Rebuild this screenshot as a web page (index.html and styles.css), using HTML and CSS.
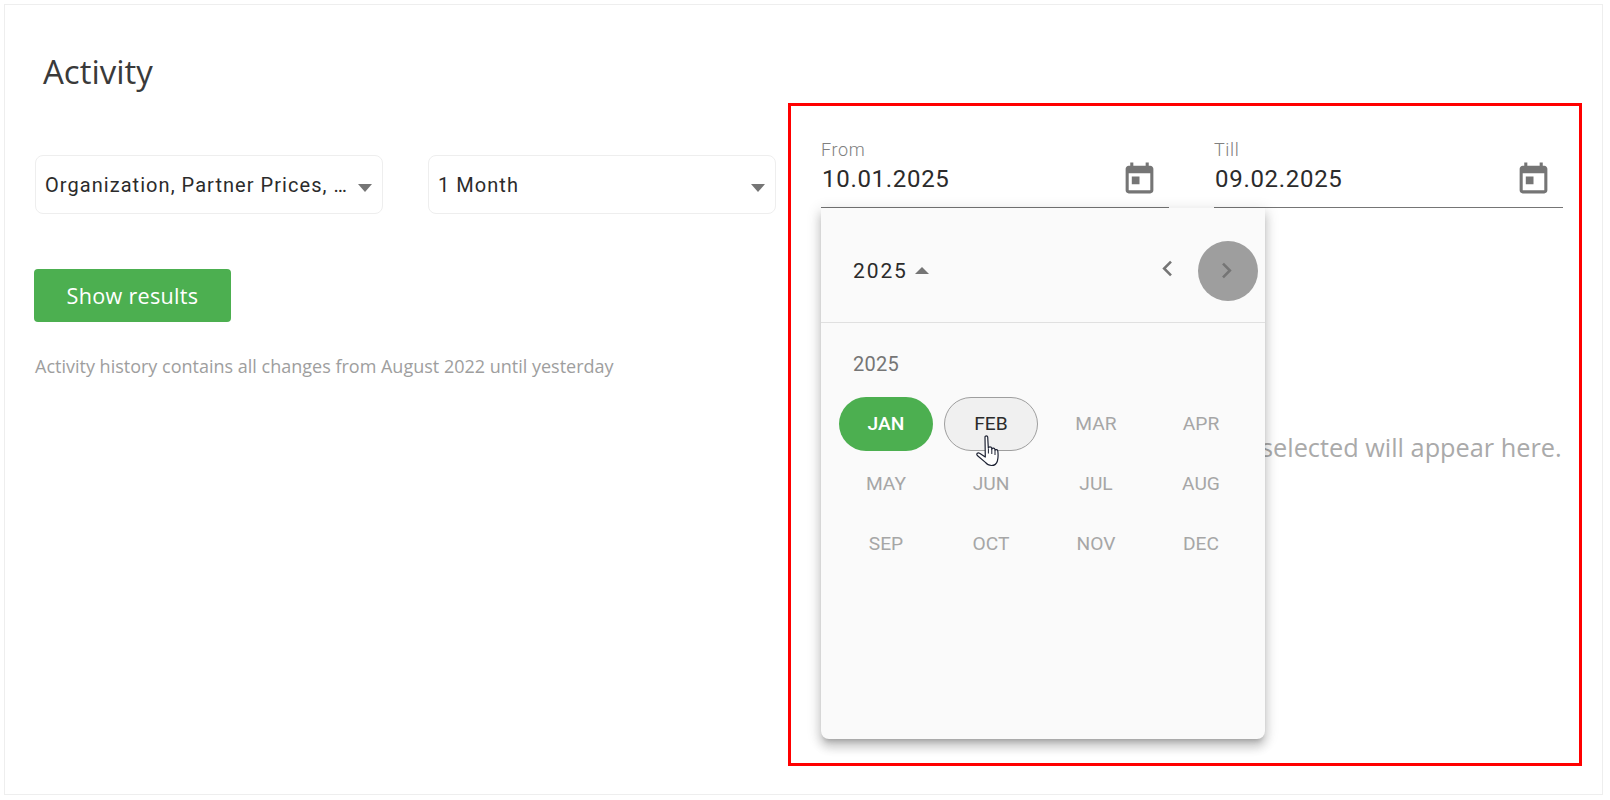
FILE: index.html
```html
<!DOCTYPE html>
<html lang="en">
<head>
<meta charset="utf-8">
<title>Activity</title>
<link rel="stylesheet" href="styles.css">
</head>
<body>
<main class="card">
  <h1 class="title">Activity</h1>
  <div class="columns">
    <section class="left">
      <div class="selects">
        <div class="select"><span class="select-text">Organization, Partner Prices, …</span><span class="arrow"></span></div>
        <div class="select"><span class="select-text">1 Month</span><span class="arrow"></span></div>
      </div>
      <button class="primary" type="button">Show results</button>
      <p class="note">Activity history contains all changes from August 2022 until yesterday</p>
    </section>
    <section class="right">
      <div class="dates">
        <div class="date">
          <div class="date-text">
            <span class="date-label">From</span>
            <span class="date-value">10.01.2025</span>
          </div>
          <svg class="cal" viewBox="0 0 24 24"><path d="M19 3h-1V1h-2v2H8V1H6v2H5c-1.11 0-1.99.9-1.99 2L3 19c0 1.1.89 2 2 2h14c1.1 0 2-.9 2-2V5c0-1.1-.9-2-2-2zm0 16H5V8h14v11zM7 10h5v5H7z"/></svg>
        </div>
        <div class="date">
          <div class="date-text">
            <span class="date-label">Till</span>
            <span class="date-value">09.02.2025</span>
          </div>
          <svg class="cal" viewBox="0 0 24 24"><path d="M19 3h-1V1h-2v2H8V1H6v2H5c-1.11 0-1.99.9-1.99 2L3 19c0 1.1.89 2 2 2h14c1.1 0 2-.9 2-2V5c0-1.1-.9-2-2-2zm0 16H5V8h14v11zM7 10h5v5H7z"/></svg>
        </div>
      </div>
      <p class="empty">selected will appear here.</p>

      <div class="picker">
        <div class="picker-head">
          <span class="picker-year">2025</span>
          <span class="up"></span>
          <span class="nav prev"><svg viewBox="0 0 24 24"><path d="M15.41 7.41 14 6l-6 6 6 6 1.41-1.41L10.83 12z"/></svg></span>
          <span class="nav next"><svg viewBox="0 0 24 24"><path d="M8.59 16.59 10 18l6-6-6-6-1.41 1.41L13.17 12z"/></svg></span>
        </div>
        <div class="picker-body">
          <div class="year-label">2025</div>
          <div class="months">
            <span class="month selected">JAN</span>
            <span class="month hover">FEB</span>
            <span class="month">MAR</span>
            <span class="month">APR</span>
            <span class="month">MAY</span>
            <span class="month">JUN</span>
            <span class="month">JUL</span>
            <span class="month">AUG</span>
            <span class="month">SEP</span>
            <span class="month">OCT</span>
            <span class="month">NOV</span>
            <span class="month">DEC</span>
          </div>
        </div>
        <svg class="hand" viewBox="0 0 26 32"><path d="M9 2c0-1.400 2.600-1.400 2.700 0l.6 11c.2-1.600 3.200-1.700 3.400.1l.1 1c.3-1.400 2.900-1.300 3.100.3l.1.9c.4-1.100 2.600-.9 2.800.7.400 3 .3 7.400-.4 10-.7 2.500-3 4.500-5.900 4.500-2.700 0-4.600-1.200-6.100-3.100L1.300 20.500c-1.300-1.700.6-3.500 2.300-2.300l5.700 3.800z" fill="#fff" stroke="#1d2233" stroke-width="1.200" stroke-linejoin="round"/><path d="M12.400 13.500v5M15.800 14v5M19 15.400V20" fill="none" stroke="#1d2233" stroke-width="1"/></svg>
      </div>
    </section>
  </div>
  <div class="marker"></div>
</main>
</body>
</html>
```
FILE: styles.css
```css
* { box-sizing: border-box; }
html, body { margin: 0; padding: 0; background: #fff; }
body { width: 1610px; height: 800px; overflow: hidden; font-family: Roboto, "Liberation Sans", sans-serif; color: #212121; }

.card {
  position: relative;
  width: 1599px;
  height: 791px;
  margin: 4px 0 0 4px;
  border: 1px solid #eeeeee;
  padding: 0 0 0 30px;
}

.title {
  margin: 0 0 0 8px;
  padding-top: 43px;
  font: 400 33px/48px "Open Sans", sans-serif;
  color: #3a3a3a;
}

.columns { display: flex; margin-top: 34px; }
.left { width: 786px; padding-top: 25px; }
.selects { display: flex; gap: 45px; }
.select {
  width: 348px;
  height: 59px;
  display: flex;
  align-items: center;
  justify-content: space-between;
  padding: 0 10px 0 10px;
  border: 1px solid #eeeeee;
  border-radius: 8px;
  background: #fff;
}
.select-text { font-size: 20px; letter-spacing: 1.05px; color: #2b2b2b; margin-left: -1px; }
.arrow {
  width: 0; height: 0;
  margin-top: 6px;
  border-left: 7px solid transparent;
  border-right: 7px solid transparent;
  border-top: 8px solid #757575;
}

.primary {
  display: block;
  width: 197px;
  height: 53px;
  margin: 55px 0 0 -1px;
  border: 0;
  border-radius: 4px;
  background: #4caf50;
  color: #fff;
  font: 400 21.6px "Open Sans", sans-serif;
  letter-spacing: 0.3px;
}
.note {
  margin: 30px 0 0 0;
  font: 400 18px/28px "Open Sans", sans-serif;
  color: #9e9e9e;
}

.right { position: relative; width: 742px; padding-top: 0; }
.dates { display: flex; gap: 45px; }
.date {
  width: 348px;
  height: 78px;
  padding-top: 8px;
  border-bottom: 1px solid #757575;
  display: flex;
  justify-content: space-between;
}
.date + .date { width: 349px; }
.date-text { display: flex; flex-direction: column; }
.date-label { font-size: 18px; line-height: 24px; letter-spacing: 0.6px; color: #808080; font-weight: 300; }
.date-value { font-size: 24px; line-height: 32px; letter-spacing: 0.7px; color: #2b2b2b; margin: 1px 0 0 1px; }
.cal { width: 37px; height: 37px; margin: 23px 11px 0 0; fill: #757575; }

.empty {
  margin: 223px 0 0 440px;
  font: 400 25.3px/32px "Open Sans", sans-serif;
  color: #aaaaaa;
  white-space: nowrap;
}

.picker {
  position: absolute;
  left: 0;
  top: 78px;
  width: 444px;
  height: 531px;
  background: #fafafa;
  border-radius: 0 0 8px 8px;
  box-shadow: 0 5px 5px -3px rgba(0,0,0,.2), 0 8px 10px 1px rgba(0,0,0,.14), 0 3px 14px 2px rgba(0,0,0,.12);
}
.picker-head {
  display: flex;
  align-items: center;
  height: 115px;
  padding: 11px 7px 0 32px;
  border-bottom: 1px solid #e0e0e0;
}
.picker-year { font-size: 21px; letter-spacing: 1.9px; color: #2b2b2b; }
.up {
  width: 0; height: 0;
  margin-left: 7px;
  border-left: 7.500px solid transparent;
  border-right: 7.500px solid transparent;
  border-bottom: 7px solid #757575;
}
.nav {
  width: 60px;
  height: 60px;
  display: flex;
  align-items: center;
  justify-content: center;
  border-radius: 50%;
}
.nav svg { width: 31px; height: 31px; fill: #757575; }
.prev { margin-left: auto; position: relative; top: -2px; }
.next { background: #9e9e9e; margin-left: 1px; padding-right: 4px; }

.picker-body { padding: 0 14px 0 18px; }
.year-label { padding: 27px 0 0 14px; font-size: 20px; line-height: 28px; color: #757575; letter-spacing: 0.3px; }
.months {
  display: grid;
  grid-template-columns: repeat(4, 94px);
  grid-auto-rows: 54px;
  column-gap: 11px;
  row-gap: 6px;
  margin-top: 19px;
}
.month {
  display: flex;
  align-items: center;
  justify-content: center;
  padding-bottom: 2px;
  border-radius: 27px;
  font-size: 19.2px;
  font-weight: 400;
  color: #a6a6a6;
}
.month.selected { background: #4caf50; color: #fff; font-weight: 500; }
.month.hover { background: #f0f0f0; border: 1px solid #9e9e9e; color: #2b2b2b; font-weight: 400; }

.hand { position: absolute; left: 155px; top: 227px; width: 26px; height: 32px; }

.marker {
  position: absolute;
  left: 783px;
  top: 98px;
  width: 794px;
  height: 663px;
  border: 3px solid #ff0000;
  pointer-events: none;
}
```
